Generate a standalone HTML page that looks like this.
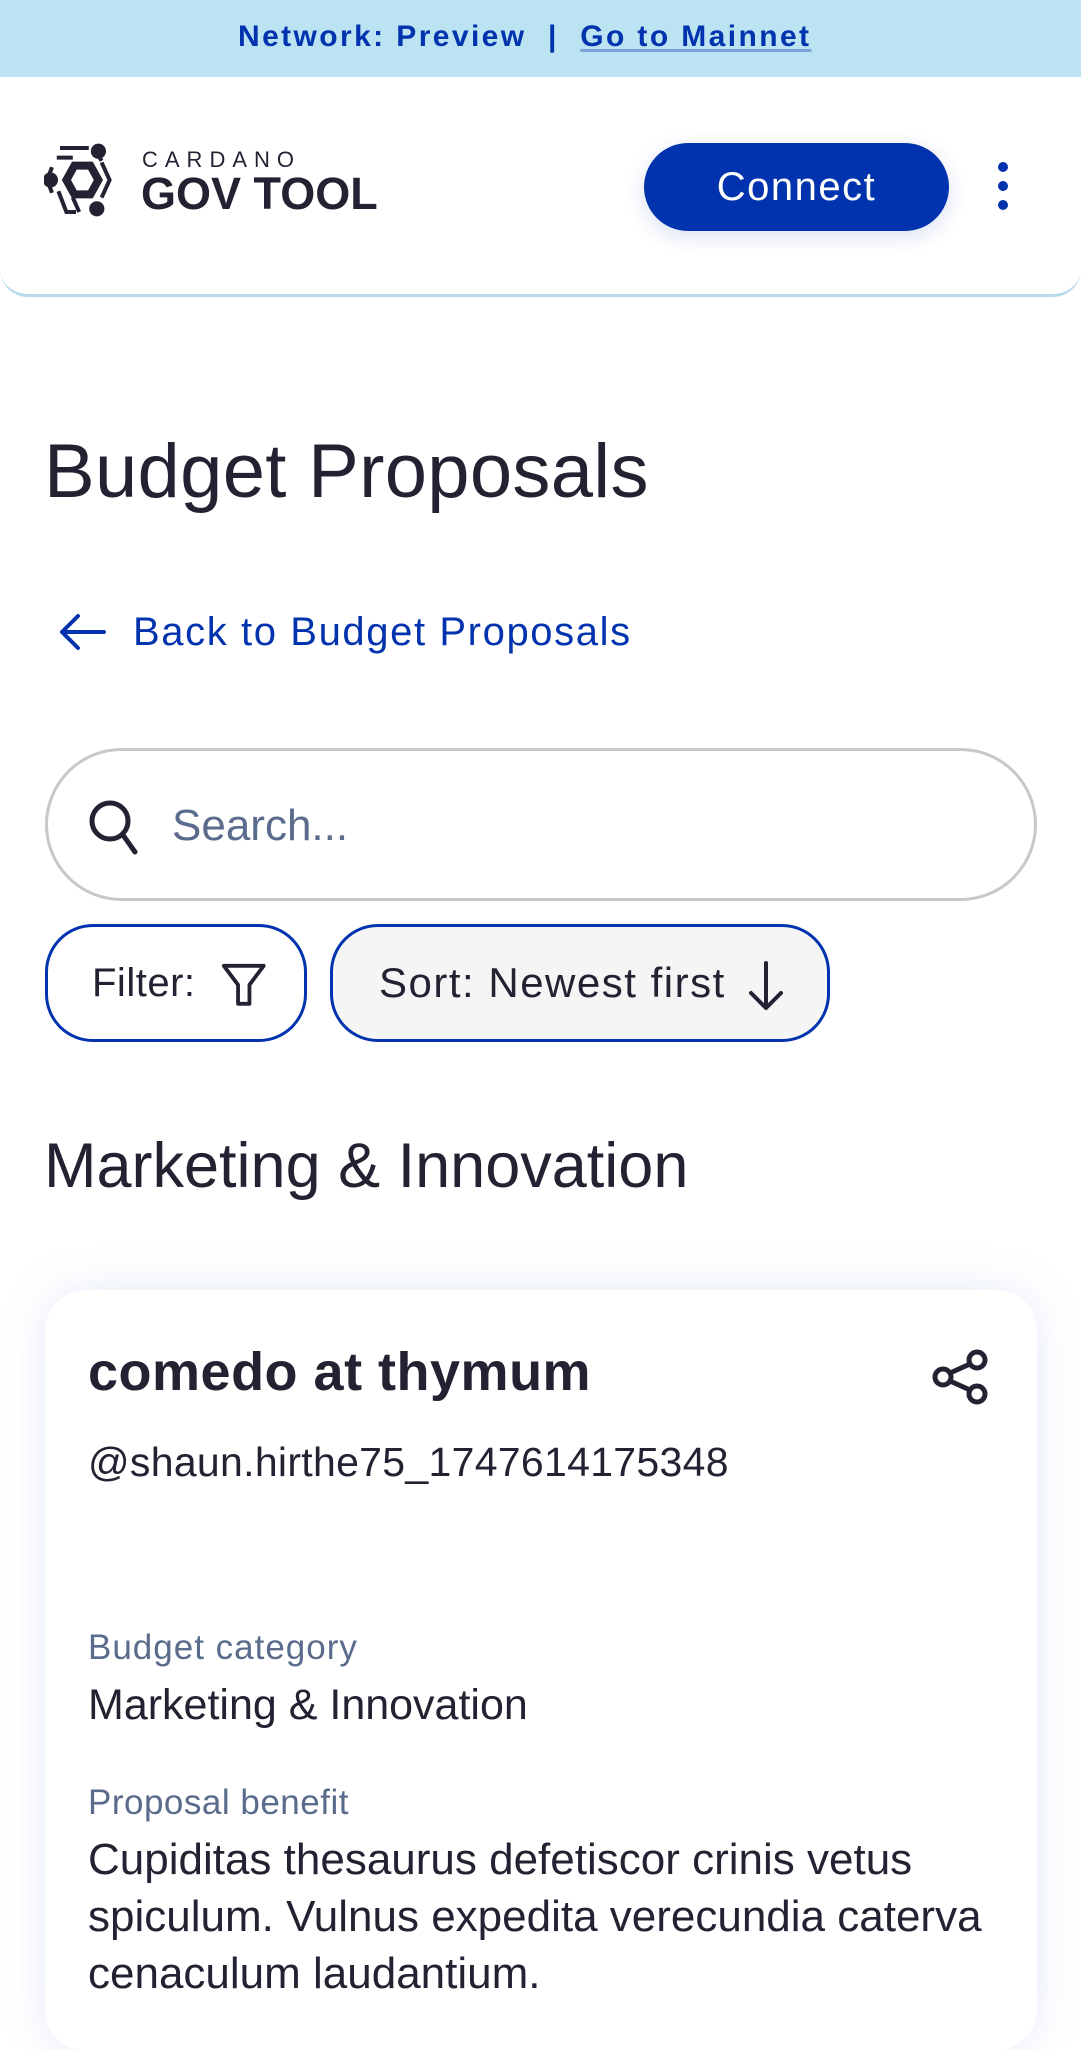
<!DOCTYPE html>
<html><head><meta charset="utf-8"><style>
*{margin:0;padding:0;box-sizing:border-box}
body{width:1081px;height:1999px;overflow:hidden;background:#fff;font-family:"Liberation Sans",sans-serif;color:#242232;position:relative}
.a{position:absolute;white-space:nowrap}
</style></head><body>
<div class="a" style="left:0;top:0;width:1081px;height:77px;background:#bce3f1"></div>
<div class="a" style="left:238px;top:20px;font-size:30px;font-weight:bold;color:#0033ad;line-height:34px;letter-spacing:2.4px">Network: Preview &nbsp;|&nbsp; <span style="text-decoration:underline;text-decoration-color:#7ba0d8;text-underline-offset:3px;text-decoration-thickness:3px">Go to Mainnet</span></div>
<div class="a" style="left:0;top:77px;width:1081px;height:220px;background:#fff;border-radius:0 0 28px 28px;border-bottom:3px solid #b5dbea"></div>
<svg class="a" style="left:44px;top:143px" width="80" height="74" viewBox="0 0 50 46" fill="none" stroke="#242232" stroke-width="2.5">
<path d="M10 3h18M8 9h10M5 15l-3 8 3 8M9 30l5 13h6M22 43l-4-9M36 12l5 11-5 11M33 6l3 5"/>
<path d="M19 14h10l5 9-5 9H19l-5-9z" stroke-width="5"/>
<circle cx="34" cy="5" r="3.5" fill="#242232"/><circle cx="4" cy="23" r="3.5" fill="#242232"/><circle cx="33" cy="41" r="3.5" fill="#242232"/>
</svg>
<div class="a" style="left:142px;top:148px;font-size:22px;letter-spacing:7px;line-height:24px">CARDANO</div>
<div class="a" style="left:141px;top:170px;font-size:45px;font-weight:bold;line-height:48px">GOV TOOL</div>
<div class="a" style="left:644px;top:143px;width:305px;height:88px;border-radius:44px;background:#0033ad;color:#fff;font-size:40px;letter-spacing:1.5px;line-height:88px;text-align:center;box-shadow:0 6px 20px rgba(0,51,173,0.15)">Connect</div>
<div class="a" style="left:998px;top:162px;width:10px;height:10px;border-radius:5px;background:#0033ad"></div>
<div class="a" style="left:998px;top:181px;width:10px;height:10px;border-radius:5px;background:#0033ad"></div>
<div class="a" style="left:998px;top:200px;width:10px;height:10px;border-radius:5px;background:#0033ad"></div>
<div class="a" style="left:44px;top:432px;font-size:76px;line-height:80px;letter-spacing:0.3px">Budget Proposals</div>
<svg class="a" style="left:58px;top:612px" width="48" height="40" viewBox="0 0 48 40" fill="none" stroke="#0033ad" stroke-width="4" stroke-linecap="round" stroke-linejoin="round"><path d="M46 20H4M20 4L4 20l16 16"/></svg>
<div class="a" style="left:133px;top:610px;font-size:40px;line-height:44px;color:#0033ad;letter-spacing:1.6px">Back to Budget Proposals</div>
<div class="a" style="left:45px;top:748px;width:992px;height:153px;border:3px solid #c8c8c8;border-radius:77px"></div>
<svg class="a" style="left:86px;top:797px" width="60" height="60" viewBox="0 0 60 60" fill="none" stroke="#242232" stroke-width="5" stroke-linecap="round"><circle cx="24" cy="24" r="18"/><path d="M37 38l12 17"/></svg>
<div class="a" style="left:172px;top:802px;font-size:44px;line-height:48px;color:#5a6b8c">Search...</div>
<div class="a" style="left:45px;top:924px;width:262px;height:118px;border:3px solid #0033ad;border-radius:48px"></div>
<div class="a" style="left:92px;top:961px;font-size:40px;line-height:44px;letter-spacing:0.5px">Filter:</div>
<svg class="a" style="left:220px;top:962px" width="50" height="48" viewBox="0 0 50 48" fill="none" stroke="#242232" stroke-width="4" stroke-linejoin="round"><path d="M4 4h42L31 24v20l-12 0V24z" transform="scale(0.95)"/></svg>
<div class="a" style="left:330px;top:924px;width:500px;height:118px;border:3px solid #0033ad;border-radius:48px;background:#f5f5f5"></div>
<div class="a" style="left:379px;top:960px;font-size:42px;line-height:46px;letter-spacing:1.5px">Sort: Newest first</div>
<svg class="a" style="left:746px;top:960px" width="40" height="52" viewBox="0 0 40 52" fill="none" stroke="#242232" stroke-width="4" stroke-linecap="round" stroke-linejoin="round"><path d="M20 3v45M5 33l15 15 15-15"/></svg>
<div class="a" style="left:44px;top:1132px;font-size:63px;line-height:68px">Marketing &amp; Innovation</div>
<div class="a" style="left:45px;top:1290px;width:992px;height:760px;border-radius:40px;background:#fff;box-shadow:0 0 40px rgba(180,195,240,0.35)"></div>
<div class="a" style="left:88px;top:1344px;font-size:54px;line-height:56px;font-weight:bold;color:#242232;letter-spacing:0.5px">comedo at thymum</div>
<svg class="a" style="left:930px;top:1346px" width="62" height="62" viewBox="0 0 62 62" fill="none" stroke="#242232" stroke-width="5"><circle cx="47" cy="14" r="8"/><circle cx="13" cy="31" r="8"/><circle cx="47" cy="48" r="8"/><path d="M20 27l20-9M20 35l20 9"/></svg>
<div class="a" style="left:88px;top:1439px;font-size:41px;line-height:46px;letter-spacing:0.3px">@shaun.hirthe75_1747614175348</div>
<div class="a" style="left:88px;top:1629px;font-size:35px;line-height:38px;color:#5a6b8c;letter-spacing:1px">Budget category</div>
<div class="a" style="left:88px;top:1682px;font-size:43px;line-height:46px">Marketing &amp; Innovation</div>
<div class="a" style="left:88px;top:1784px;font-size:35px;line-height:38px;color:#5a6b8c;letter-spacing:0.5px">Proposal benefit</div>
<div class="a" style="left:88px;top:1831px;font-size:44px;line-height:57px;white-space:normal;width:930px">Cupiditas thesaurus defetiscor crinis vetus spiculum. Vulnus expedita verecundia caterva cenaculum laudantium.</div>
</body></html>
